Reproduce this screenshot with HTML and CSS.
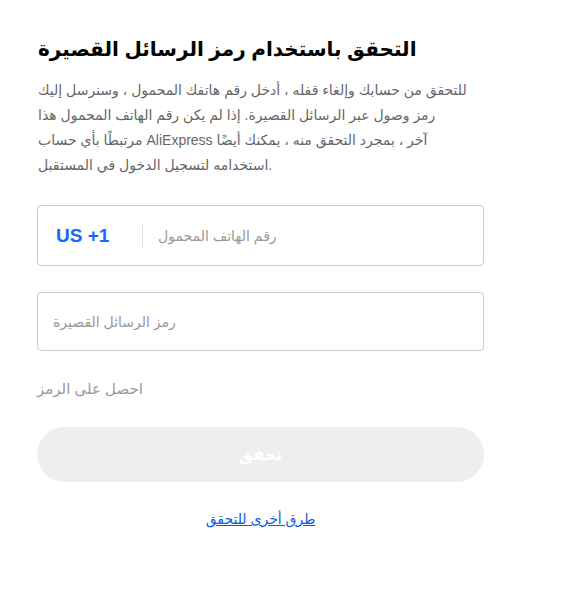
FILE: index.html
```html
<!DOCTYPE html>
<html lang="ar">
<head>
<meta charset="utf-8">
<link rel="stylesheet" href="styles.css">
</head>
<body>
<div class="page">
  <h1 class="title">التحقق باستخدام رمز الرسائل القصيرة</h1>
  <p class="desc">
    <span class="line">للتحقق من حسابك وإلغاء قفله ، أدخل رقم هاتفك المحمول ، وسنرسل إليك</span>
    <span class="line">رمز وصول عبر الرسائل القصيرة. إذا لم يكن رقم الهاتف المحمول هذا</span>
    <span class="line">مرتبطًا بأي حساب AliExpress آخر ، بمجرد التحقق منه ، يمكنك أيضًا</span>
    <span class="line">استخدامه لتسجيل الدخول في المستقبل.</span>
  </p>
  <div class="field field-phone">
    <span class="country">US +1</span>
    <span class="divider"></span>
    <span class="placeholder">رقم الهاتف المحمول</span>
  </div>
  <div class="field field-code">
    <span class="placeholder">رمز الرسائل القصيرة</span>
  </div>
  <div class="get-code">احصل على الرمز</div>
  <button class="submit" type="button">تحقق</button>
  <div class="other"><a href="#" class="other-link">طرق أخرى للتحقق</a></div>
</div>
</body>
</html>
```
FILE: styles.css
```css
html, body {
  margin: 0;
  padding: 0;
  background: #fff;
}
body {
  font-family: "Liberation Sans", "DejaVu Sans", "Noto Sans", sans-serif;
}
.page {
  width: 447px;
  padding: 34px 0 0 37px;
  display: flex;
  flex-direction: column;
}
.title {
  margin: 0;
  font-size: 20px;
  font-weight: bold;
  color: #000;
  line-height: 30px;
  padding-left: 1px;
}
.desc {
  margin: 14px 0 0 0;
  font-size: 14px;
  line-height: 25px;
  color: #666;
  padding-left: 1px;
}
.line {
  display: block;
  white-space: nowrap;
}
.field {
  box-sizing: border-box;
  border: 1px solid #ccc;
  border-radius: 4px;
  display: flex;
  align-items: center;
}
.field-phone {
  margin-top: 27px;
  height: 61px;
  padding-left: 18px;
}
.field-code {
  margin-top: 26px;
  height: 59px;
  padding-left: 15px;
}
.country {
  font-size: 19px;
  font-weight: bold;
  color: #1a66ff;
  width: 86px;
}
.divider {
  width: 1px;
  height: 26px;
  background: #e2e2e2;
}
.field-phone .placeholder {
  margin-left: 15px;
}
.placeholder {
  font-size: 14px;
  color: #999;
}
.get-code {
  margin-top: 27px;
  font-size: 15px;
  color: #999;
  line-height: 22px;
}
.submit {
  margin-top: 27px;
  height: 55px;
  border: none;
  border-radius: 28px;
  background: #eee;
  color: #fff;
  font-family: inherit;
  font-size: 16px;
  font-weight: bold;
  cursor: default;
}
.other {
  margin-top: 27px;
  text-align: center;
  font-size: 14px;
  line-height: 20px;
}
.other-link {
  color: #0a5ce6;
  text-decoration: underline;
}
```
